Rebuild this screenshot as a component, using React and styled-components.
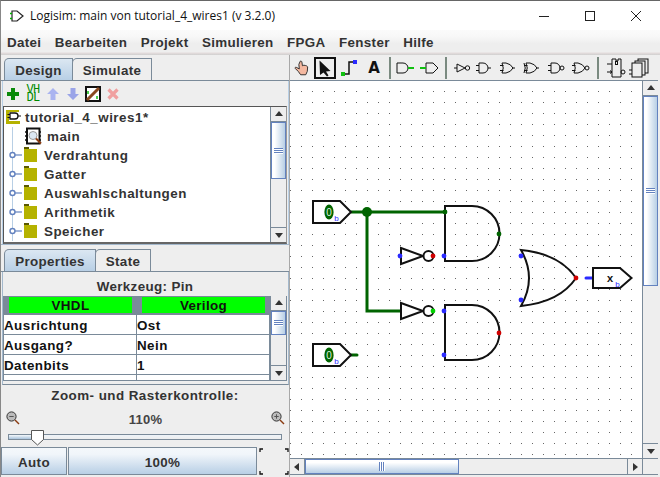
import React from "react";
import styled, { createGlobalStyle } from "styled-components";

const GlobalStyle = createGlobalStyle`
  html, body { margin: 0; padding: 0; background: #eeeeee; }
  * { box-sizing: border-box; }
  body { font-family: "Liberation Sans", Arial, sans-serif; }
`;

const Window = styled.div`
  width: 660px;
  height: 477px;
  display: flex;
  flex-direction: column;
  overflow: hidden;
  background: #eeeeee;
  border-top: 1px solid #666;
  border-left: 1px solid #888;
`;

const TitleBar = styled.div`
  height: 29px;
  display: flex;
  align-items: center;
  background: #fff;
  flex: none;
`;

const AppIcon = styled.svg`
  width: 16px;
  height: 16px;
  margin: 0 5px 0 8px;
  flex: none;
`;

const TitleText = styled.div`
  font-family: "Open Sans", "Liberation Sans", sans-serif;
  font-size: 12px;
  color: #111;
  flex: 1;
  white-space: nowrap;
`;

const WinButtons = styled.div`
  display: flex;
  align-items: center;
  margin-right: 1px;
`;

const WinButton = styled.svg`
  width: 46px;
  height: 12px;
`;

const MenuBar = styled.div`
  height: 25px;
  flex: none;
  display: flex;
  align-items: center;
  padding-left: 6px;
  gap: 13.5px;
  background: linear-gradient(#fbfbfb 0, #f8f8f8 25%, #eeeeee 55%, #eeeeee 88%, #e4dcdc 92%, #cfcfcf 100%);
`;

const MenuItem = styled.span`
  font-size: 13.4px;
  font-weight: bold;
  letter-spacing: 0.32px;
  color: #333;
`;

const Main = styled.div`
  flex: 1;
  display: flex;
  min-height: 0;
`;

const Sidebar = styled.div`
  width: 289px;
  flex: none;
  display: flex;
  flex-direction: column;
  border-right: 1px solid #a8a8a8;
`;

const DesignPane = styled.div`
  height: 190px;
  flex: none;
  padding-top: 3px;
  border-bottom: 1px solid #a3b8cc;
  display: flex;
  flex-direction: column;
`;

const TabStrip = styled.div`
  display: flex;
  height: 23px;
  flex: none;
  padding-left: 3px;
  border-bottom: 1px solid #7a8a99;
`;

const Tab = styled.div`
  width: ${({ $w }) => $w}px;
  display: flex;
  align-items: center;
  justify-content: center;
  padding-top: 2px;
  font-size: 13.4px;
  font-weight: bold;
  letter-spacing: 0.35px;
  color: #333;
  border: 1px solid #7a8a99;
  border-bottom: none;
  border-top-left-radius: 5px;
  margin-left: ${({ $active }) => ($active ? 0 : -1)}px;
  background: ${({ $active }) => ($active ? "linear-gradient(#dbe7f2, #b8cfe5)" : "#eeeeee")};
`;

const PaneBody = styled.div`
  flex: 1;
  min-height: 0;
  display: flex;
  flex-direction: column;
  margin-left: 1px;
  padding: 1px 1px 0 0;
  border-left: 1px solid #b8cfe5;
  border-right: 1px solid #b8cfe5;
`;

const ProjectBar = styled.div`
  height: 24px;
  flex: none;
  display: flex;
  align-items: center;
  padding-left: 2px;
  gap: 4px;
`;

const SmallTool = styled.svg`
  width: 16px;
  height: 16px;
  flex: none;
`;

const VhdlBadge = styled.div`
  width: 16px;
  font-family: "Liberation Mono", monospace;
  font-size: 12px;
  line-height: 8px;
  color: #008a00;
  text-align: center;
  letter-spacing: -0.6px;
`;

const TreeFrame = styled.div`
  flex: 1;
  min-height: 0;
  display: flex;
  background: #fff;
  border: 1px solid #555;
  border-right-color: #999;
  border-bottom: 2px solid #666;
`;

const Tree = styled.div`
  flex: 1;
  min-width: 0;
  overflow: hidden;
`;

const TreeRow = styled.div`
  height: 19px;
  flex: none;
  display: flex;
  align-items: center;
  padding-left: ${({ $indent }) => $indent || 0}px;
  font-size: 13.4px;
  font-weight: bold;
  letter-spacing: 0.5px;
  color: #333;
  white-space: nowrap;
  background: ${({ $line }) =>
    $line ? "linear-gradient(#b8cfe5, #b8cfe5) 8px 0 / 1px 100% no-repeat" : "none"};

  &:first-child { height: 20px; }
`;

const TreeIcon = styled.svg`
  flex: none;
  width: ${({ $w }) => $w}px;
  height: 19px;
  margin-right: ${({ $gap }) => $gap}px;
`;

const ScrollTrack = styled.div`
  display: flex;
  flex-direction: ${({ $horizontal }) => ($horizontal ? "row" : "column")};
  background: #eeeeee;
  flex: none;
  ${({ $horizontal }) => ($horizontal ? "height: 16px; flex: 1;" : "width: 16px;")}
  border-${({ $horizontal }) => ($horizontal ? "top" : "left")}: 1px solid #7a8a99;
`;

const ScrollArrow = styled.div`
  flex: none;
  width: ${({ $horizontal }) => ($horizontal ? "15px" : "100%")};
  height: ${({ $horizontal }) => ($horizontal ? "100%" : "15px")};
  display: flex;
  align-items: center;
  justify-content: center;
  background: #eeeeee;
  border-${({ $end, $horizontal }) =>
    $horizontal ? ($end ? "left" : "right") : $end ? "top" : "bottom"}: 1px solid #7a8a99;

  &::after {
    content: "";
    border: 4px solid transparent;
    ${({ $dir }) =>
      ({
        up: "border-bottom: 5px solid #333; margin-top: -5px;",
        down: "border-top: 5px solid #333; margin-top: 5px;",
        left: "border-right: 5px solid #333; margin-left: -5px;",
        right: "border-left: 5px solid #333; margin-left: 5px;",
      })[$dir]}
  }
`;

const ScrollThumb = styled.div`
  flex: none;
  display: flex;
  align-items: center;
  justify-content: center;
  border: 1px solid #6382bf;
  ${({ $horizontal, $size }) =>
    $horizontal
      ? `width: ${$size}px; background: linear-gradient(#fff, #fff 20%, #b8cfe5);`
      : `height: ${$size}px; background: linear-gradient(90deg, #fff, #fff 20%, #b8cfe5);`}
`;

const ThumbGrip = styled.div`
  ${({ $horizontal }) =>
    $horizontal
      ? "width: 6px; height: 9px; background: repeating-linear-gradient(90deg, #6382bf 0 1px, #fff 1px 2px);"
      : "width: 9px; height: 6px; background: repeating-linear-gradient(#6382bf 0 1px, #fff 1px 2px);"}
`;

const ScrollRest = styled.div`
  flex: 1;
`;

const PropsPane = styled.div`
  height: 136px;
  flex: none;
  margin-top: 4px;
  display: flex;
  flex-direction: column;
`;

const PropsBody = styled.div`
  flex: 1;
  min-height: 0;
  display: flex;
  flex-direction: column;
  margin-left: 1px;
  padding: 1px 1px 0 0;
  border-left: 1px solid #a3b8cc;
  border-right: 1px solid #a3b8cc;
  border-bottom: 1px solid #7a8a99;
`;

const ToolTitle = styled.div`
  height: 23px;
  flex: none;
  display: flex;
  align-items: center;
  justify-content: center;
  padding-top: 3px;
  font-size: 13.4px;
  font-weight: bold;
  letter-spacing: 0.35px;
  color: #333;
`;

const AttrFrame = styled.div`
  flex: 1;
  min-height: 0;
  display: flex;
  margin-bottom: 3px;
  background: #fff;
  border-left: 1px solid #7a8a99;
  border-right: 1px solid #7a8a99;
  border-bottom: 1px solid #7a8a99;
`;

const AttrTable = styled.div`
  flex: 1;
  min-width: 0;
  overflow: hidden;
`;

const HeadRow = styled.div`
  display: grid;
  grid-template-columns: 133px 133px;
  height: 19px;
  background: #7a8a99;
`;

const HeadCell = styled.div`
  margin: 1px 5px 2px 5px;
  background: #00ff00;
  color: #111;
  font-size: 13.4px;
  font-weight: bold;
  letter-spacing: 0.35px;
  display: flex;
  align-items: center;
  justify-content: center;
  padding-top: 1px;
`;

const AttrRow = styled.div`
  display: grid;
  grid-template-columns: 133px 133px;
  height: 20px;
  border-bottom: 1px solid #7a8a99;
`;

const AttrCell = styled.div`
  font-size: 13.4px;
  font-weight: bold;
  letter-spacing: 0.45px;
  color: #111;
  padding-top: 1px;
  display: flex;
  align-items: center;
  border-right: 1px solid #7a8a99;
`;

const ZoomPane = styled.div`
  flex: 1;
  min-height: 0;
  display: flex;
  flex-direction: column;
`;

const ZoomTitle = styled.div`
  height: 21px;
  flex: none;
  display: flex;
  align-items: center;
  justify-content: center;
  font-size: 13.4px;
  font-weight: bold;
  letter-spacing: 0.45px;
  color: #333;
`;

const ZoomRow = styled.div`
  height: 24px;
  flex: none;
  display: flex;
  align-items: center;
  justify-content: space-between;
  padding: 0 4px 0 5px;
  font-size: 13px;
  font-weight: bold;
  letter-spacing: 0.2px;
  color: #444;
`;

const ZoomValue = styled.span`
  padding-top: 3px;
`;

const Lens = styled.svg`
  width: 14px;
  height: 14px;
`;

const SliderBox = styled.div`
  position: relative;
  height: 17px;
  flex: none;
  margin: 0 7px 0 7px;
`;

const SliderTrack = styled.div`
  position: absolute;
  left: 0;
  right: 0;
  top: 4px;
  height: 6px;
  border: 1px solid #7a8a99;
  background: linear-gradient(#eef3f8, #eeeeee);
`;

const SliderFill = styled.div`
  height: 100%;
  background: linear-gradient(#f4f8fb, #a9c3dc);
`;

const SliderThumb = styled.svg`
  position: absolute;
  top: -1px;
  width: 15px;
  height: 17px;
`;

const ZoomButtons = styled.div`
  flex: 1;
  display: flex;
  align-items: flex-start;
`;

const ZoomButton = styled.div`
  width: ${({ $w }) => $w}px;
  height: 28px;
  flex: none;
  display: flex;
  align-items: center;
  justify-content: center;
  padding-top: 2px;
  font-size: 13.4px;
  font-weight: bold;
  letter-spacing: 0.35px;
  color: #333;
  border: 1px solid #7a8a99;
  margin-right: 1px;
  background: linear-gradient(#f4f8fb, #f0f5fa 25%, #b8cfe5);
`;

const GridCorners = styled.svg`
  width: 30px;
  height: 27px;
  margin: 1px 0 0 1px;
  flex: none;
`;

const Workspace = styled.div`
  flex: 1;
  min-width: 0;
  display: flex;
  flex-direction: column;
  padding: 0 2px 2px 0;
`;

const ToolBar = styled.div`
  height: 25px;
  flex: none;
  display: flex;
  align-items: flex-start;
  padding-top: 1px;
  background: #eeeeee;
`;

const ToolButton = styled.div`
  width: 24px;
  height: 24px;
  flex: none;
  display: flex;
  align-items: center;
  justify-content: center;
  svg { display: block; }
`;

const SelectedBox = styled.div`
  width: 22px;
  height: 22px;
  flex: none;
  margin-right: 2px;
  border: 2.5px solid #111;
  display: flex;
  align-items: center;
  justify-content: center;
`;

const ToolLetter = styled.span`
  font-family: "DejaVu Sans", sans-serif;
  font-size: 15px;
  font-weight: bold;
  color: #111;
`;

const ToolSep = styled.div`
  width: 2px;
  height: 22px;
  flex: none;
  background: #7a8a80;
  margin: 1px ${({ $after }) => $after}px 0 ${({ $before }) => $before}px;
`;

const CanvasArea = styled.div`
  flex: 1;
  min-height: 0;
  display: flex;
  border-top: 1px solid #7a8a99;
`;

const CanvasMain = styled.div`
  flex: 1;
  min-width: 0;
  background: #fff;
  svg { display: block; }
`;

const BottomBar = styled.div`
  height: 17px;
  flex: none;
  display: flex;
  border-bottom: 1px solid #7a8a99;
`;

const ScrollCorner = styled.div`
  width: 16px;
  flex: none;
  background: #eeeeee;
  border-left: 1px solid #7a8a99;
  border-top: 1px solid #7a8a99;
`;

const Scrollbar = ({ horizontal, size }) => (
  <ScrollTrack $horizontal={horizontal}>
    <ScrollArrow $horizontal={horizontal} $dir={horizontal ? "left" : "up"} />
    <ScrollThumb $horizontal={horizontal} $size={size}>
      <ThumbGrip $horizontal={horizontal} />
    </ScrollThumb>
    <ScrollRest />
    <ScrollArrow $horizontal={horizontal} $end $dir={horizontal ? "right" : "down"} />
  </ScrollTrack>
);

const Expander = () => (
  <TreeIcon $w={20} $gap={0} viewBox="0 0 20 19">
    <circle cx="8.5" cy="9" r="2.5" fill="#fff" stroke="#6382bf" strokeWidth="1.4" />
    <path d="M11 9h7" stroke="#6382bf" strokeWidth="1.2" />
  </TreeIcon>
);

const Folder = () => (
  <TreeIcon $w={13} $gap={7} viewBox="0 0 13 19">
    <path d="M0 1h5v2H0z" fill="#5a5800" />
    <rect x="0" y="3" width="13" height="13" fill="#b5b200" />
  </TreeIcon>
);

const ProjectIcon = () => (
  <TreeIcon $w={18} $gap={2} viewBox="0 0 18 19">
    <path d="M1 2h13v2H4v9h11v3H1z" fill="#b5b200" />
    <path d="M5 5h5a3 3 0 0 1 0 6H5z" fill="#fff" stroke="#111" strokeWidth="1.3" />
    <path d="M2.500 6.500H5M2.500 9.500H5M13 8h3" stroke="#111" strokeWidth="1.2" />
  </TreeIcon>
);

const CircuitIcon = () => (
  <TreeIcon $w={18} $gap={4} viewBox="0 0 18 19">
    <rect x="2" y="1.5" width="12.5" height="15" fill="#fff" stroke="#111" strokeWidth="2" />
    <path d="M0 5h2M0 9h2M0 13h2M14 5h2M14 9h2M14 13h2" stroke="#111" strokeWidth="1.4" />
    <circle cx="8" cy="8.5" r="4" fill="#dbe7f2" stroke="#999" strokeWidth="1" />
    <path d="M11 11.5l5 5" stroke="#8a3a10" strokeWidth="2" />
  </TreeIcon>
);

const Magnifier = ({ plus }) => (
  <Lens viewBox="0 0 14 14">
    <circle cx="5.5" cy="5.5" r="4.6" fill="#bbb" stroke="#333" strokeWidth="1" />
    <path d="M3.3 5.5h4.4" stroke="#555" strokeWidth="1" />
    {plus && <path d="M5.5 3.3v4.4" stroke="#555" strokeWidth="1" />}
    <path d="M9 9l4 4" stroke="#8a3a10" strokeWidth="1.4" />
  </Lens>
);

const bodyPaths = {
  and: "M7 7h4a5 5 0 0 1 0 10H7z",
  or: "M6 7h4q5 1 7 5q-2 4-7 5H6q2.5-5 0-10z",
};

const GateIcon = ({ kind, bubble, xor }) => (
  <svg width="24" height="24" viewBox="2 0 24 24" fill="none" stroke="#111" strokeWidth="1">
    <path d={bodyPaths[kind]} />
    <path d={kind === "and" ? "M4 9.5h3M4 14.5h3" : "M4 9.5h3.500M4 14.5h3.500"} />
    {xor && <path d="M4 7q2.500 5 0 10" />}
    {bubble ? <circle cx={kind === "and" ? 18 : 19} cy="12" r="2" /> : <path d="M16 12h3" />}
  </svg>
);

const GATES = [
  { kind: "and" },
  { kind: "or" },
  { kind: "or", xor: true },
  { kind: "and", bubble: true },
  { kind: "or", bubble: true },
];

const dotBlue = "#2a2aff";
const wireDark = "#006400";

const InputPin = ({ y }) => (
  <g>
    <path d={`M313 ${y - 11}h27l11 11-11 11h-27z`} fill="#fff" stroke="#111" strokeWidth="2" />
    <ellipse cx="329" cy={y} rx="4.6" ry="7.4" fill={wireDark} />
    <text x="329" y={y + 3.6} textAnchor="middle" fontSize="10" fontFamily="Liberation Sans" fill="#dfeedf">0</text>
    <text x="336.5" y={y + 9} textAnchor="middle" fontSize="8" fontFamily="Liberation Sans" fill={dotBlue}>b</text>
  </g>
);

const Inverter = ({ y, out }) => (
  <g fill="#fff" stroke="#111" strokeWidth="2">
    <path d={`M401 ${y - 8}l22 8-22 8z`} />
    <circle cx="428.5" cy={y} r="5" />
    <circle cx="433" cy={y} r="2.4" fill={out} stroke="none" />
  </g>
);

const AndGate = ({ top }) => (
  <path
    d={`M472 ${top}h-27v55h27a27.5 27.5 0 0 0 0-55z`}
    fill="none"
    stroke="#111"
    strokeWidth="2"
  />
);

const Circuit = () => (
  <svg width="352" height="377" viewBox="290 81 352 377">
    <defs>
      <pattern id="grid" x="301" y="201" width="11" height="11" patternUnits="userSpaceOnUse">
        <rect width="1" height="1" fill="#666" />
      </pattern>
    </defs>
    <rect x="290" y="81" width="352" height="377" fill="url(#grid)" />

    <path d="M351 212h94M367 212v99h34" fill="none" stroke={wireDark} strokeWidth="3" />
    <path d="M351 355h6" stroke={wireDark} strokeWidth="3" strokeLinecap="round" />
    <circle cx="367" cy="212" r="5" fill={wireDark} />

    <InputPin y={212} />
    <InputPin y={355} />

    <Inverter y={256} out="#d00000" />
    <Inverter y={311} out="#00d000" />
    <circle cx="400" cy="256" r="2.4" fill={dotBlue} />

    <AndGate top={206} />
    <AndGate top={305} />
    <circle cx="445" cy="212" r="2.4" fill={wireDark} />
    <circle cx="444" cy="256" r="2.4" fill={dotBlue} />
    <circle cx="499" cy="234" r="2.4" fill={wireDark} />
    <circle cx="444" cy="311" r="2.4" fill={dotBlue} />
    <circle cx="444" cy="355" r="2.4" fill={dotBlue} />
    <circle cx="499" cy="333" r="2.4" fill="#d00000" />

    <path d="M521 250Q560 254 576 278Q560 302 521 306Q537 278 521 250z" fill="none" stroke="#111" strokeWidth="2" />
    <circle cx="521" cy="256" r="2.4" fill={dotBlue} />
    <circle cx="521" cy="300" r="2.4" fill={dotBlue} />
    <circle cx="576" cy="278" r="2.4" fill="#d00000" />

    <path d="M586 278h6" stroke={dotBlue} strokeWidth="3" strokeLinecap="round" />
    <path d="M593 268h27l11.500 10-11.500 10h-27z" fill="#fff" stroke="#111" strokeWidth="2" />
    <text x="610" y="281.500" textAnchor="middle" fontSize="11" fontWeight="bold" fontFamily="Liberation Mono" fill="#111">x</text>
    <text x="617.500" y="286.500" textAnchor="middle" fontSize="8" fontFamily="Liberation Sans" fill={dotBlue}>b</text>
  </svg>
);

export default function App() {
  return (
    <>
      <GlobalStyle />
      <Window>
        <TitleBar>
          <AppIcon viewBox="0 0 16 16" fill="none">
            <path d="M3 3h5l6 5-6 5H3z" stroke="#222" strokeWidth="1.2" />
            <path d="M1 5.500h2M1 10.500h2" stroke="#00b000" strokeWidth="1.600" />
          </AppIcon>
          <TitleText>Logisim: main von tutorial_4_wires1 (v 3.2.0)</TitleText>
          <WinButtons>
            <WinButton viewBox="0 0 46 12">
              <path d="M18 6.500h10" stroke="#222" strokeWidth="1" />
            </WinButton>
            <WinButton viewBox="0 0 46 12">
              <rect x="18.500" y="1.500" width="9" height="9" fill="none" stroke="#222" strokeWidth="1" />
            </WinButton>
            <WinButton viewBox="0 0 46 12">
              <path d="M18 1l10 10M28 1L18 11" stroke="#222" strokeWidth="1" />
            </WinButton>
          </WinButtons>
        </TitleBar>

        <MenuBar>
          {["Datei", "Bearbeiten", "Projekt", "Simulieren", "FPGA", "Fenster", "Hilfe"].map((m) => (
            <MenuItem key={m}>{m}</MenuItem>
          ))}
        </MenuBar>

        <Main>
          <Sidebar>
            <DesignPane>
              <TabStrip>
                <Tab $w={69} $active>Design</Tab>
                <Tab $w={80}>Simulate</Tab>
              </TabStrip>
              <PaneBody>
                <ProjectBar>
                  <SmallTool viewBox="0 0 16 16">
                    <path d="M6 2h4v4h4v4h-4v4H6v-4H2V6h4z" fill="#0a8a0a" />
                  </SmallTool>
                  <VhdlBadge>VH<br />DL</VhdlBadge>
                  <SmallTool viewBox="0 0 16 16">
                    <path d="M8 2l6 6h-3.500v6h-5V8H2z" fill="#aab4f0" />
                  </SmallTool>
                  <SmallTool viewBox="0 0 16 16">
                    <path d="M8 14l6-6h-3.500V2h-5v6H2z" fill="#9aa4e8" />
                  </SmallTool>
                  <SmallTool viewBox="0 0 16 16">
                    <rect x="1" y="1" width="14" height="14" fill="#fff" stroke="#111" strokeWidth="2" />
                    <path d="M2 14L14 2" stroke="#8a4a20" strokeWidth="3" />
                    <path d="M3 5v3M12 10v3" stroke="#10c010" strokeWidth="1.500" />
                  </SmallTool>
                  <SmallTool viewBox="0 0 16 16">
                    <path d="M3.500 3.500l9 9M12.500 3.500l-9 9" stroke="#f0a0a0" strokeWidth="3.200" />
                  </SmallTool>
                </ProjectBar>
                <TreeFrame>
                  <Tree>
                    <TreeRow $indent={1}><ProjectIcon />tutorial_4_wires1*</TreeRow>
                    <TreeRow $line $indent={21}><CircuitIcon />main</TreeRow>
                    {["Verdrahtung", "Gatter", "Auswahlschaltungen", "Arithmetik", "Speicher"].map((name) => (
                      <TreeRow key={name} $line>
                        <Expander /><Folder />{name}
                      </TreeRow>
                    ))}
                  </Tree>
                  <Scrollbar size={57} />
                </TreeFrame>
              </PaneBody>
            </DesignPane>

            <PropsPane>
              <TabStrip>
                <Tab $w={92} $active>Properties</Tab>
                <Tab $w={56}>State</Tab>
              </TabStrip>
              <PropsBody>
                <ToolTitle>Werkzeug: Pin</ToolTitle>
                <AttrFrame>
                  <AttrTable>
                    <HeadRow>
                      <HeadCell>VHDL</HeadCell>
                      <HeadCell>Verilog</HeadCell>
                    </HeadRow>
                    <AttrRow><AttrCell>Ausrichtung</AttrCell><AttrCell>Ost</AttrCell></AttrRow>
                    <AttrRow><AttrCell>Ausgang?</AttrCell><AttrCell>Nein</AttrCell></AttrRow>
                    <AttrRow><AttrCell>Datenbits</AttrCell><AttrCell>1</AttrCell></AttrRow>
                    <AttrRow><AttrCell /><AttrCell /></AttrRow>
                  </AttrTable>
                  <Scrollbar size={24} />
                </AttrFrame>
              </PropsBody>
            </PropsPane>

            <ZoomPane>
              <ZoomTitle>Zoom- und Rasterkontrolle:</ZoomTitle>
              <ZoomRow>
                <Magnifier />
                <ZoomValue>110%</ZoomValue>
                <Magnifier plus />
              </ZoomRow>
              <SliderBox>
                <SliderTrack>
                  <SliderFill style={{ width: "9%" }} />
                </SliderTrack>
                <SliderThumb style={{ left: "22px" }} viewBox="0 0 15 17">
                  <path d="M1.500 1.500h12v9l-6 5.500-6-5.500z" fill="#fff" stroke="#555" strokeWidth="1" />
                </SliderThumb>
              </SliderBox>
              <ZoomButtons>
                <ZoomButton $w={66}>Auto</ZoomButton>
                <ZoomButton $w={189}>100%</ZoomButton>
                <GridCorners viewBox="0 0 30 27" fill="none" stroke="#111" strokeWidth="1.300">
                  <path d="M1 4V1h3M26 1h3v3M1 23v3h3M26 26h3v-3" />
                </GridCorners>
              </ZoomButtons>
            </ZoomPane>
          </Sidebar>

          <Workspace>
            <ToolBar>
              <ToolButton>
                <svg width="18" height="18" viewBox="0 0 20 20">
                  <path d="M8 2.500c1-.6 1.700 0 1.900 1l.6 4 1.600-.6 1.600.3 1.500.5 1.100 1-.4 5-1.700 3.800H8.500L6 14 2.500 10.500c-.6-.8.300-1.700 1.200-1.200L7 11 6.500 6z" fill="#f4b8a0" stroke="#222" strokeWidth="1" />
                </svg>
              </ToolButton>
              <ToolButton>
                <SelectedBox>
                  <svg width="16" height="18" viewBox="0 0 16 18">
                    <path d="M2.500 1.500l11 10.500-4.500.5 2.500 4-1.500 1-3.500-4-3.500 2.500z" fill="#111" />
                  </svg>
                </SelectedBox>
              </ToolButton>
              <ToolButton>
                <svg width="24" height="24" viewBox="0 0 24 24">
                  <path d="M5 18h6V6h6" fill="none" stroke="#111" strokeWidth="1.500" />
                  <rect x="3" y="16" width="4" height="4" fill="#10c010" />
                  <rect x="15" y="4" width="4" height="4" fill="#2a2aff" />
                </svg>
              </ToolButton>
              <ToolButton><ToolLetter>A</ToolLetter></ToolButton>
              <ToolSep $before={3} $after={2} />
              <ToolButton>
                <svg width="24" height="24" viewBox="0 0 24 24" fill="none">
                  <path d="M4 7h6a5 5 0 0 1 0 10H4z" stroke="#111" strokeWidth="1" />
                  <path d="M15 12h6" stroke="#10c010" strokeWidth="2" />
                </svg>
              </ToolButton>
              <ToolButton>
                <svg width="24" height="24" viewBox="0 0 24 24" fill="none">
                  <path d="M9 7h7l5 5-5 5H9z" stroke="#111" strokeWidth="1" />
                  <path d="M3 12h6" stroke="#10c010" strokeWidth="2" />
                </svg>
              </ToolButton>
              <ToolSep $before={4} $after={3} />
              <ToolButton>
                <svg width="24" height="24" viewBox="0 0 24 24" fill="none" stroke="#111" strokeWidth="1">
                  <path d="M4 12h3M7 8l8 4-8 4z" />
                  <circle cx="17.500" cy="12" r="2.200" />
                </svg>
              </ToolButton>
              {GATES.map((g, i) => (
                <ToolButton key={i}><GateIcon {...g} /></ToolButton>
              ))}
              <ToolSep $before={3} $after={4} />
              <ToolButton>
                <svg width="24" height="24" viewBox="0 0 24 24" fill="none" stroke="#111" strokeWidth="1">
                  <path d="M9 3h4v2h2V3h3v18H9zM4 8h5M4 16h5" />
                  <path d="M7 14.500l2 1.500-2 1.500" />
                  <circle cx="20" cy="16" r="2" />
                  <rect x="12.500" y="5.500" width="2" height="3" />
                </svg>
              </ToolButton>
              <ToolButton>
                <svg width="24" height="24" viewBox="0 0 24 24" fill="#eeeeee" stroke="#111" strokeWidth="1">
                  <rect x="11" y="3" width="10" height="14" />
                  <rect x="8" y="5" width="10" height="14" />
                  <rect x="5" y="7" width="10" height="14" />
                  <path d="M2 14h3M2 18h3" />
                </svg>
              </ToolButton>
            </ToolBar>

            <CanvasArea>
              <CanvasMain><Circuit /></CanvasMain>
              <Scrollbar size={190} />
            </CanvasArea>
            <BottomBar>
              <Scrollbar horizontal size={154} />
              <ScrollCorner />
            </BottomBar>
          </Workspace>
        </Main>
      </Window>
    </>
  );
}
